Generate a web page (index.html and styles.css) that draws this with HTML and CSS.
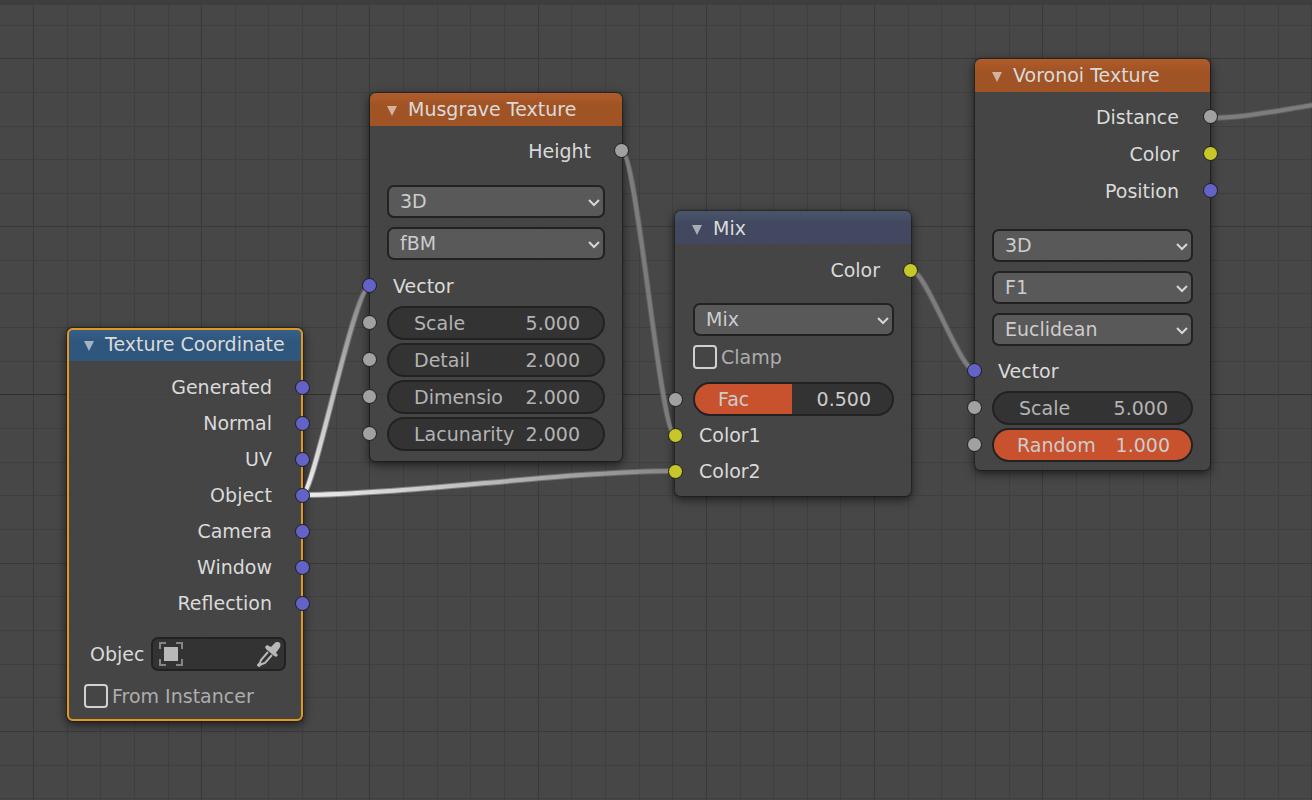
FILE: index.html
```html
<!DOCTYPE html>
<html lang="en">
<head>
<meta charset="utf-8">
<title>Shader Node Editor</title>
<link rel="stylesheet" href="styles.css">
</head>
<body>
<main class="editor">
  <svg class="grid" aria-hidden="true">
    <defs>
      <pattern id="grid-tile" x="33" y="58" width="841" height="841" patternUnits="userSpaceOnUse">
        <path class="grid-minor" d="M34 0h1v841h-1zM67 0h1v841h-1zM101 0h1v841h-1zM135 0h1v841h-1zM202 0h1v841h-1zM235 0h1v841h-1zM269 0h1v841h-1zM303 0h1v841h-1zM370 0h1v841h-1zM404 0h1v841h-1zM437 0h1v841h-1zM471 0h1v841h-1zM538 0h1v841h-1zM572 0h1v841h-1zM606 0h1v841h-1zM639 0h1v841h-1zM707 0h1v841h-1zM740 0h1v841h-1zM774 0h1v841h-1zM807 0h1v841h-1z"/>
        <path class="grid-minor" d="M0 34h841v1h-841zM0 68h841v1h-841zM0 101h841v1h-841zM0 135h841v1h-841zM0 202h841v1h-841zM0 235h841v1h-841zM0 269h841v1h-841zM0 303h841v1h-841zM0 370h841v1h-841zM0 404h841v1h-841zM0 437h841v1h-841zM0 471h841v1h-841zM0 538h841v1h-841zM0 572h841v1h-841zM0 606h841v1h-841zM0 639h841v1h-841zM0 707h841v1h-841zM0 740h841v1h-841zM0 774h841v1h-841zM0 808h841v1h-841z"/>
        <path class="grid-major" d="M0 0h1v841h-1zM168 0h1v841h-1zM336 0h1v841h-1zM505 0h1v841h-1zM673 0h1v841h-1zM0 0h841v1h-841zM0 168h841v1h-841zM0 505h841v1h-841zM0 673h841v1h-841z"/>
        <path class="grid-axis" d="M0 336h841v1h-841z"/>
      </pattern>
    </defs>
    <rect width="100%" height="100%" fill="url(#grid-tile)"/>
  </svg>
  <div class="top-edge"></div>

  <svg class="links" aria-hidden="true">
    <defs>
      <linearGradient id="fade-up" gradientUnits="userSpaceOnUse" x1="302" y1="495" x2="370" y2="286">
        <stop offset="0" stop-color="#ffffff"/><stop offset="1" stop-color="#8c8c8c"/>
      </linearGradient>
      <linearGradient id="fade-right" gradientUnits="userSpaceOnUse" x1="302" y1="495" x2="675" y2="471">
        <stop offset="0" stop-color="#ffffff"/><stop offset="1" stop-color="#8c8c8c"/>
      </linearGradient>
    </defs>
    <g class="link-halo">
      <path stroke="url(#fade-up)" d="M302 495C314 495 354 286 370 286"/>
      <path stroke="url(#fade-right)" d="M302 495C400 495 570 471 675 471"/>
      <path d="M622 152C637 152 660 435 675 435"/>
      <path d="M911 270C926 270 960 371 975 371"/>
      <path d="M1210 118C1245 118 1280 110 1320 104"/>
    </g>
    <g class="link-core">
      <path stroke="url(#fade-up)" d="M302 495C314 495 354 286 370 286"/>
      <path stroke="url(#fade-right)" d="M302 495C400 495 570 471 675 471"/>
      <path d="M622 152C637 152 660 435 675 435"/>
      <path d="M911 270C926 270 960 371 975 371"/>
      <path d="M1210 118C1245 118 1280 110 1320 104"/>
    </g>
  </svg>

  <section class="node node-coord selected">
    <header class="node-head input-head">
      <button class="fold" aria-label="Collapse Texture Coordinate"><svg viewBox="0 0 10 10"><path d="M0 0h10L5 10z"/></svg></button>
      <h2>Texture Coordinate</h2>
    </header>
    <div class="row out">Generated<i class="socket vector"></i></div>
    <div class="row out">Normal<i class="socket vector"></i></div>
    <div class="row out">UV<i class="socket vector"></i></div>
    <div class="row out">Object<i class="socket vector"></i></div>
    <div class="row out">Camera<i class="socket vector"></i></div>
    <div class="row out">Window<i class="socket vector"></i></div>
    <div class="row out">Reflection<i class="socket vector"></i></div>
    <div class="row object-row">
      <label for="object">Objec</label>
      <div class="object-field">
        <svg class="object-icon" viewBox="0 0 24 24"><path class="corners" d="M1 7V1h6M17 1h6v6M23 17v6h-6M7 23H1v-6"/><path class="solid" d="M5 5h14v14H5z"/></svg>
        <input id="object" type="text">
        <button class="pick" aria-label="Pick object"><svg viewBox="0 0 24 25"><path class="solid" d="M14 5C17 2 18 0 20 0c3 0 4 2 3 5-1 2-3 4-4 6l2 2-2 2-3-2-7-6-1-2 2-2z"/><path class="tube" d="M11 10l-7 8-1 3-2 2 1 1 3-2 3-1 7-8"/></svg></button>
      </div>
    </div>
    <label class="row check"><input type="checkbox">From Instancer</label>
  </section>

  <section class="node node-musgrave">
    <header class="node-head texture-head">
      <button class="fold" aria-label="Collapse Musgrave Texture"><svg viewBox="0 0 10 10"><path d="M0 0h10L5 10z"/></svg></button>
      <h2>Musgrave Texture</h2>
    </header>
    <div class="row out">Height<i class="socket value"></i></div>
    <div class="menus">
      <div class="menu"><select aria-label="Dimensions"><option>3D</option></select><svg viewBox="0 0 12 8"><path d="M1 1l5 5 5-5"/></svg></div>
      <div class="menu"><select aria-label="Type"><option>fBM</option></select><svg viewBox="0 0 12 8"><path d="M1 1l5 5 5-5"/></svg></div>
    </div>
    <div class="row in">Vector<i class="socket vector"></i></div>
    <div class="row"><i class="socket value left"></i><label class="number">Scale<input type="text" value="5.000"></label></div>
    <div class="row"><i class="socket value left"></i><label class="number">Detail<input type="text" value="2.000"></label></div>
    <div class="row"><i class="socket value left"></i><label class="number">Dimensio<input type="text" value="2.000"></label></div>
    <div class="row"><i class="socket value left"></i><label class="number">Lacunarity<input type="text" value="2.000"></label></div>
  </section>

  <section class="node node-mix">
    <header class="node-head color-head">
      <button class="fold" aria-label="Collapse Mix"><svg viewBox="0 0 10 10"><path d="M0 0h10L5 10z"/></svg></button>
      <h2>Mix</h2>
    </header>
    <div class="row out">Color<i class="socket color"></i></div>
    <div class="menus">
      <div class="menu"><select aria-label="Blend mode"><option>Mix</option></select><svg viewBox="0 0 12 8"><path d="M1 1l5 5 5-5"/></svg></div>
    </div>
    <label class="row check"><input type="checkbox">Clamp</label>
    <div class="row factor-row"><i class="socket value left"></i>
      <div class="number slider"><input id="fac" class="half" type="range" min="0" max="1" step="0.001" value="0.5"><label for="fac">Fac</label><output for="fac">0.500</output></div>
    </div>
    <div class="row in">Color1<i class="socket color"></i></div>
    <div class="row in">Color2<i class="socket color"></i></div>
  </section>

  <section class="node node-voronoi">
    <header class="node-head texture-head">
      <button class="fold" aria-label="Collapse Voronoi Texture"><svg viewBox="0 0 10 10"><path d="M0 0h10L5 10z"/></svg></button>
      <h2>Voronoi Texture</h2>
    </header>
    <div class="row out">Distance<i class="socket value"></i></div>
    <div class="row out">Color<i class="socket color"></i></div>
    <div class="row out">Position<i class="socket vector"></i></div>
    <div class="menus">
      <div class="menu"><select aria-label="Dimensions"><option>3D</option></select><svg viewBox="0 0 12 8"><path d="M1 1l5 5 5-5"/></svg></div>
      <div class="menu"><select aria-label="Feature"><option>F1</option></select><svg viewBox="0 0 12 8"><path d="M1 1l5 5 5-5"/></svg></div>
      <div class="menu"><select aria-label="Distance metric"><option>Euclidean</option></select><svg viewBox="0 0 12 8"><path d="M1 1l5 5 5-5"/></svg></div>
    </div>
    <div class="row in">Vector<i class="socket vector"></i></div>
    <div class="row"><i class="socket value left"></i><label class="number">Scale<input type="text" value="5.000"></label></div>
    <div class="row"><i class="socket value left"></i>
      <div class="number slider"><input id="random" class="full" type="range" min="0" max="1" step="0.001" value="1"><label for="random">Random</label><output for="random">1.000</output></div>
    </div>
  </section>
</main>
</body>
</html>
```
FILE: styles.css
```css
* { box-sizing: border-box; }

body {
  margin: 0;
  background: #474747;
  color: #dadada;
  font: 19px/24px "DejaVu Sans", sans-serif;
}

button, input, select {
  margin: 0;
  padding: 0;
  border: 0;
  background: none;
  color: inherit;
  font: inherit;
}

/* Canvas */
.editor {
  position: relative;
  min-height: 100vh;
  overflow: hidden;
}

.grid, .links {
  position: absolute;
  inset: 0;
  width: 100%;
  height: 100%;
}

.grid-minor { fill: #3f3f3f; }
.grid-major { fill: #393939; }
.grid-axis { fill: #303030; }

.top-edge {
  position: relative;
  height: 5px;
  background: #3e3e3e;
}

.links {
  z-index: 1;
  fill: none;
  stroke: #828282;
  pointer-events: none;
}

.link-halo { stroke-width: 6; opacity: 0.4; }
.link-core { stroke-width: 4; opacity: 0.85; }

/* Nodes */
.node {
  --row: 37px;
  position: absolute;
  display: flex;
  flex-direction: column;
  width: 235px;
  border-radius: 6px;
  background: rgba(69, 69, 69, 0.9);
  box-shadow: 0 0 1px 1px rgba(20, 20, 20, 0.5), 0 3px 10px 1px rgba(0, 0, 0, 0.55);
}

.node-coord { --row: 36px; left: 67px; top: 328px; width: 236px; padding-bottom: 7px; }
.node-musgrave { left: 370px; top: 93px; width: 252px; padding-bottom: 9px; }
.node-mix { --row: 36px; left: 675px; top: 211px; width: 236px; padding-bottom: 7px; }
.node-voronoi { left: 975px; top: 59px; padding-bottom: 7px; }

.selected::after {
  content: "";
  position: absolute;
  inset: 0;
  border: 2px solid #e0981f;
  border-radius: 6px;
  pointer-events: none;
}

.node-head {
  display: flex;
  align-items: center;
  gap: 11px;
  height: 33px;
  margin-bottom: 8px;
  padding: 0 0 2px 17px;
  border-radius: 6px 6px 0 0;
}

.node-head h2 {
  margin: 0;
  font-size: 19px;
  font-weight: 400;
  white-space: nowrap;
}

.input-head { background: linear-gradient(#38628a, #2f567d 40%); }
.texture-head { margin-bottom: 6px; background: linear-gradient(#b05c2b, #a05324 40%); }
.color-head { padding-bottom: 0; background: linear-gradient(#49556a, #414860 40%); }

.fold { width: 10px; height: 10px; margin-top: 4px; }
.fold svg { display: block; fill: #ffffff; opacity: 0.55; }

.row {
  position: relative;
  display: flex;
  align-items: center;
  height: var(--row);
  padding: 0 17px;
}

.out { justify-content: flex-end; padding-right: 31px; }
.in { padding-left: 23px; }

.socket {
  position: absolute;
  z-index: 2;
  right: -7px;
  width: 15px;
  height: 15px;
  border: 1px solid #1c1c1c;
  border-radius: 50%;
}

.in .socket, .socket.left { right: auto; left: -8px; }
.node-mix .in .socket, .node-mix .socket.left { left: -7px; }
.node-voronoi .out .socket { right: -8px; }
.value { background: #a1a1a1; }
.vector { background: #6363c7; }
.color { background: #c7c729; }

/* Drop-down menus */
.menus {
  display: flex;
  flex-direction: column;
  gap: 9px;
  padding: 16px 17px 7px;
}

.node-voronoi .menus { padding: 20px 17px 6px; }
.node-mix .menus { padding: 15px 17px 3px 18px; }

.menu { display: grid; align-items: center; }
.menu > * { grid-area: 1 / 1; }

.menu select {
  width: 100%;
  height: 33px;
  padding: 0 11px 2px;
  border: 2px solid #222222;
  border-radius: 7px;
  appearance: none;
  background: #595959;
  color: #cccccc;
}

.menu svg {
  justify-self: end;
  width: 12px;
  height: 8px;
  margin: 2px 5px 0 0;
  fill: none;
  stroke: #d6d6d6;
  stroke-width: 2;
  pointer-events: none;
}

/* Number fields and sliders */
.number {
  position: relative;
  display: flex;
  flex: 1;
  align-items: center;
  justify-content: space-between;
  height: 34px;
  min-width: 0;
  padding: 0 23px 0 25px;
  overflow: hidden;
  border: 2px solid #222222;
  border-radius: 17px;
  background: #333333;
  color: #b3b3b3;
}

.number input[type="text"] { width: 56px; text-align: right; }

.slider { padding: 0 21px 0 23px; color: #cccccc; }
.slider label, .slider output { position: relative; pointer-events: none; }

.slider input {
  position: absolute;
  inset: 0;
  width: 100%;
  height: 100%;
  appearance: none;
}

.slider input::-webkit-slider-thumb { appearance: none; width: 0; }
.slider .half { background: linear-gradient(90deg, #c8512e 49%, transparent 49%); }
.slider .full { background: #c8512e; }

.factor-row { margin-top: 6px; }
.node-mix .row:not(.in):not(.out) { padding-left: 18px; }
.node-mix .in { padding-left: 24px; }

/* Tick boxes */
.check { gap: 4px; color: #adadad; }

.check input {
  width: 24px;
  height: 24px;
  border: 2px solid #d0d0d0;
  border-radius: 4px;
  appearance: none;
}

.node-coord .check { margin-top: 6px; }

/* Object picker */
.object-row { margin-top: 15px; padding-left: 23px; }
.object-row label { flex: 0 0 61px; }

.object-field {
  display: flex;
  flex: 1;
  align-items: center;
  height: 34px;
  min-width: 0;
  padding: 0 3px 0 6px;
  border: 2px solid #222222;
  border-radius: 7px;
  background: #333333;
}

.object-field input { flex: 1; min-width: 0; }
.object-icon { width: 24px; height: 24px; }
.pick { width: 24px; height: 25px; }
.pick svg { display: block; width: 24px; height: 25px; }
.solid { fill: #b8b8b8; }
.corners { fill: none; stroke: #858585; stroke-width: 2; }
.tube { fill: none; stroke: #b8b8b8; stroke-width: 2; }
```
